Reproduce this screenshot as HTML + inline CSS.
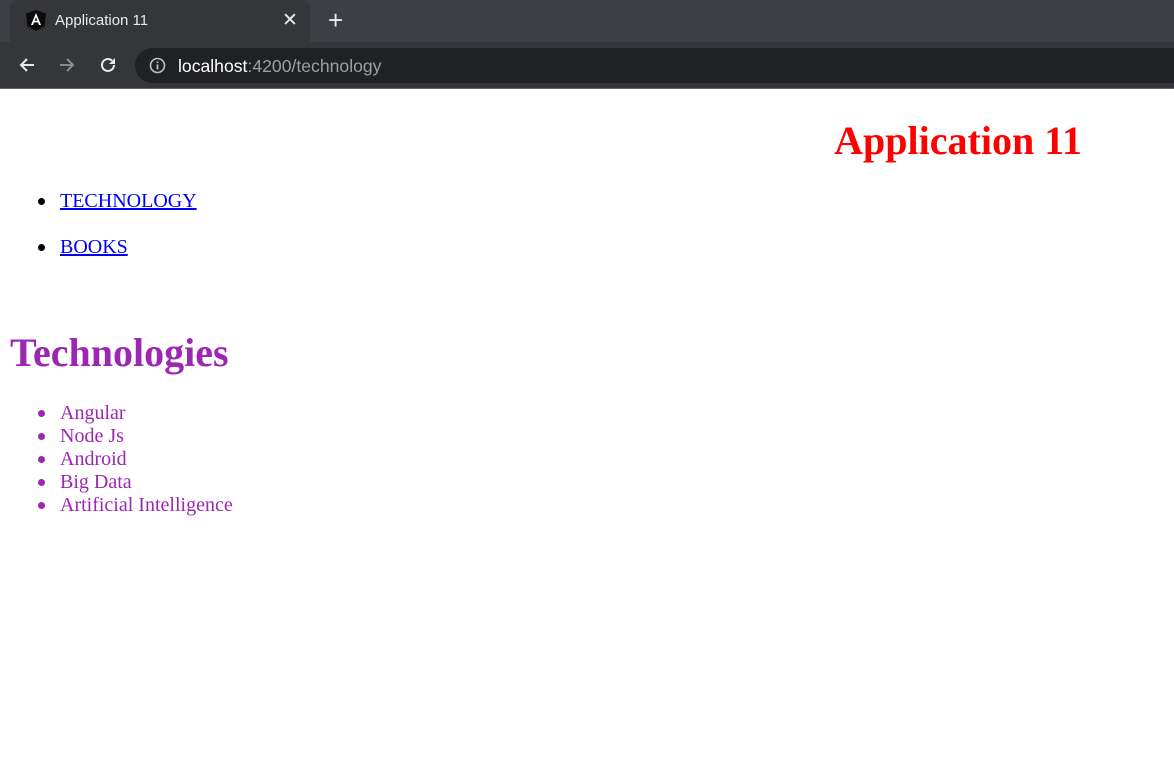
<!DOCTYPE html>
<html><head><style>
body{margin:0;width:1174px;height:780px;position:relative;background:#fff;font-family:"Liberation Serif",serif;overflow:hidden}
.frame{position:absolute;left:0;top:0;width:1174px;height:42px;background:#3c3f43}
.tab{position:absolute;left:10px;top:0;width:300px;height:42px;background:#35363a;border-radius:8px 8px 0 0}
.toolbar{position:absolute;left:0;top:42px;width:1174px;height:46px;background:#35363a;border-bottom:1px solid #5f6368}
.omni{position:absolute;left:135px;top:48px;width:1060px;height:35px;background:#202124;border-radius:18px}
.ui{font-family:"Liberation Sans",sans-serif;position:absolute}
.a{position:absolute;white-space:nowrap}
.dot{position:absolute;width:7px;height:7px;border-radius:50%}
</style></head><body>
<div class="frame"></div><div class="tab"></div>
<svg class="ui" style="left:26px;top:10px" width="20" height="21" viewBox="0 0 20 21"><path d="M10 0L0 3.5l1.5 13L10 21l8.5-4.5L20 3.5z" fill="#0c0c0c"/><path d="M10 3L5 15h2l1-2.6h4l1 2.6h2L10 3zm-1.4 7.8L10 7.2l1.4 3.6z" fill="#fff"/></svg>
<div class="ui" style="left:55px;top:12px;color:#e8eaed;font-size:15px">Application 11</div>
<div class="ui" style="left:282px;top:9px;color:#e8eaed;font-size:19px">✕</div>
<div class="ui" style="left:328px;top:5px;color:#e8eaed;font-size:26px">+</div>
<div class="toolbar"></div>
<svg class="ui" style="left:18px;top:56px" width="18" height="18" viewBox="0 0 18 18"><path d="M16 9H3M9 3L3 9l6 6" stroke="#e8eaed" stroke-width="2" fill="none"/></svg>
<svg class="ui" style="left:58px;top:56px" width="18" height="18" viewBox="0 0 18 18"><path d="M2 9h13M9 3l6 6-6 6" stroke="#8a8c8f" stroke-width="2" fill="none"/></svg>
<svg class="ui" style="left:98px;top:55px" width="20" height="20" viewBox="0 0 20 20"><path d="M16 10a6 6 0 1 1-2-4.5" stroke="#e8eaed" stroke-width="2" fill="none"/><path d="M17 3v6h-6z" fill="#e8eaed"/></svg>
<div class="omni"></div>
<svg class="ui" style="left:149px;top:57px" width="17" height="17" viewBox="0 0 17 17"><circle cx="8.5" cy="8.5" r="7" stroke="#bdc1c6" stroke-width="1.6" fill="none"/><path d="M8.5 7.5v5M8.5 4.5v1.5" stroke="#bdc1c6" stroke-width="1.8"/></svg>
<div class="ui" style="left:178px;top:56px;font-size:17.6px;color:#9aa0a6"><span style="color:#fff">localhost</span>:4200/technology</div>

<div class="a" style="right:92px;top:117px;color:#f00;font-weight:bold;font-size:40px">Application 11</div>
<div class="dot" style="left:38px;top:198px;background:#000"></div>
<div class="a" style="left:60px;top:190px;font-size:20px;color:#00e;text-decoration:underline">TECHNOLOGY</div>
<div class="dot" style="left:38px;top:244px;background:#000"></div>
<div class="a" style="left:60px;top:236px;font-size:20px;color:#00e;text-decoration:underline">BOOKS</div>
<div class="a" style="left:10px;top:329px;font-size:40px;font-weight:bold;color:#9c27b0">Technologies</div>
<div class="dot" style="left:38px;top:410px;background:#9c27b0"></div>
<div class="dot" style="left:38px;top:433px;background:#9c27b0"></div>
<div class="dot" style="left:38px;top:456px;background:#9c27b0"></div>
<div class="dot" style="left:38px;top:479px;background:#9c27b0"></div>
<div class="dot" style="left:38px;top:502px;background:#9c27b0"></div>
<div class="a" style="left:60px;top:402px;font-size:20px;color:#9c27b0;line-height:23px">Angular<br>Node Js<br>Android<br>Big Data<br>Artificial Intelligence</div>
</body></html>
